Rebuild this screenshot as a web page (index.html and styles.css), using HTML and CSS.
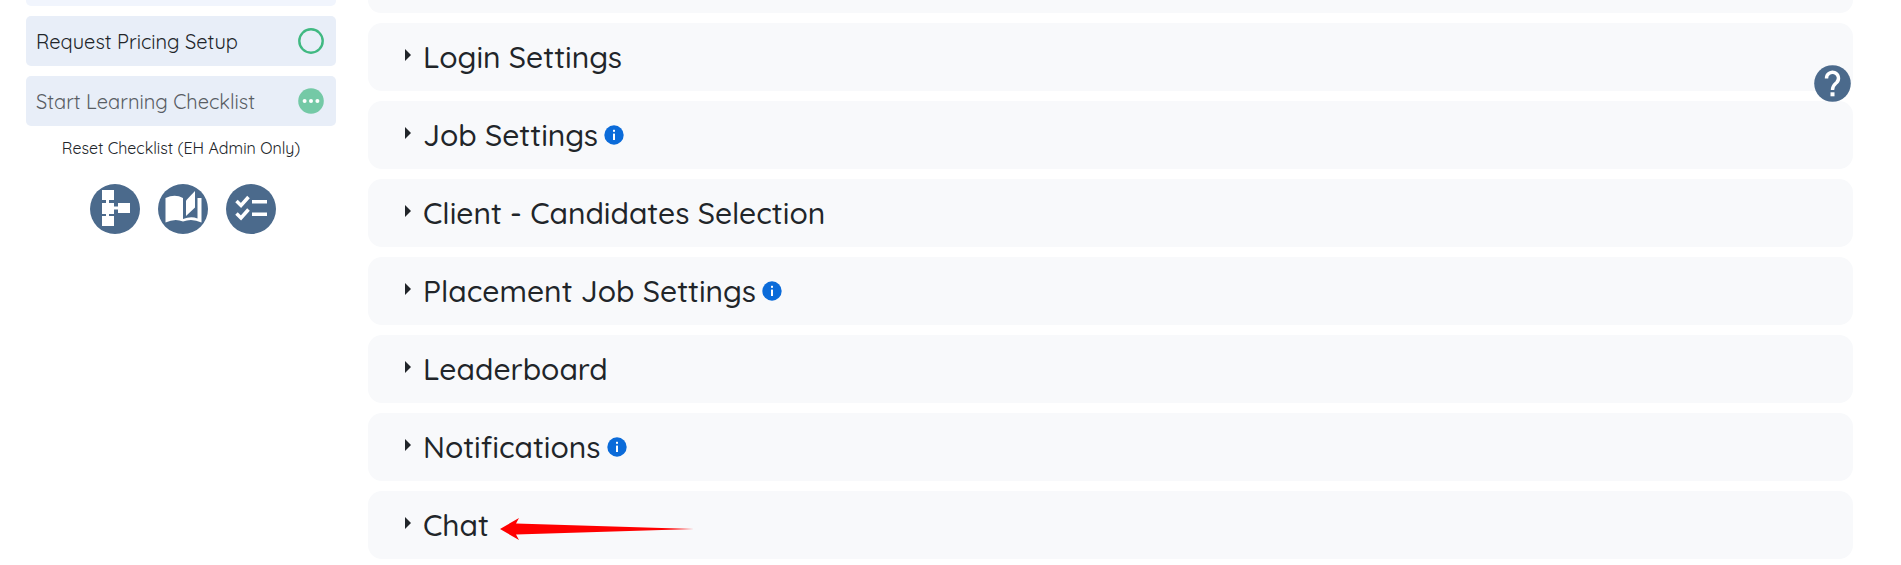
FILE: index.html
```html
<!DOCTYPE html>
<html lang="en">
<head>
<meta charset="utf-8">
<meta name="viewport" content="width=device-width, initial-scale=1">
<title>Settings</title>
<link rel="stylesheet" href="styles.css">
</head>
<body>
<svg class="defs" aria-hidden="true">
  <symbol id="info" viewBox="0 0 20 20"><circle cx="10" cy="10" r="9.7" fill="#0b6bd9"/><rect x="9" y="4.8" width="2" height="2" fill="#fff"/><rect x="9" y="8.6" width="2" height="6.4" fill="#fff"/></symbol>
  <symbol id="caret" viewBox="0 0 6 12"><path d="M0 0L6 6L0 12Z" fill="#212529"/></symbol>
</svg>
<div class="page">
  <aside class="sidebar">
    <div class="step-cut"></div>
    <button class="step" type="button">Request Pricing Setup
      <svg class="status" viewBox="0 0 26 26" aria-hidden="true"><circle cx="13" cy="13" r="11.7" fill="none" stroke="#40b982" stroke-width="2.4"/></svg>
    </button>
    <button class="step step-muted" type="button">Start Learning Checklist
      <svg class="status" viewBox="0 0 26 26" aria-hidden="true"><circle cx="13" cy="13" r="12.8" fill="#74c9a6"/><g fill="#fff"><circle cx="6.6" cy="13" r="2"/><circle cx="13" cy="13" r="2"/><circle cx="19.4" cy="13" r="2"/></g></svg>
    </button>
    <button class="reset" type="button">Reset Checklist (EH Admin Only)</button>
    <div class="tools">
      <button class="tool" type="button" aria-label="Workflow">
        <svg viewBox="0 0 50 50" aria-hidden="true"><g fill="#fff"><path d="M12 6h12v10h-12zM12 19h12v11h-12zM12 32h12v10h-12zM28 19h12v10h-12z"/><path d="M16 15h3v18h-3zM23 22.500h6v3h-6z"/></g></svg>
      </button>
      <button class="tool" type="button" aria-label="Guide">
        <svg viewBox="0 0 50 50" aria-hidden="true"><path d="M7.500 14Q17 9.500 25 14V37.500Q17 34 7.500 38.500Z" fill="#fff"/><path d="M28 16.500L37 7V23.500L28 32Z" fill="#fff"/><path d="M39.500 14H43.500V38.500Q34 34 25 37.500V35Q33 32 39.500 34.500Z" fill="#fff"/></svg>
      </button>
      <button class="tool" type="button" aria-label="Checklist">
        <svg viewBox="0 0 50 50" aria-hidden="true"><path d="M10.500 17L15 21.500L22.500 13M10.500 29.500L15 34L22.500 25.500" fill="none" stroke="#fff" stroke-width="3.500"/><path d="M26 16h15v3.500h-15zM26 28.500h15v3.500h-15z" fill="#fff"/></svg>
      </button>
    </div>
  </aside>
  <main class="sections">
    <div class="section-cut"></div>
    <button class="section" type="button"><svg class="caret"><use href="#caret"/></svg><span>Login Settings</span></button>
    <button class="section" type="button"><svg class="caret"><use href="#caret"/></svg><span>Job Settings</span><svg class="info"><use href="#info"/></svg></button>
    <button class="section" type="button"><svg class="caret"><use href="#caret"/></svg><span>Client - Candidates Selection</span></button>
    <button class="section" type="button"><svg class="caret"><use href="#caret"/></svg><span>Placement Job Settings</span><svg class="info"><use href="#info"/></svg></button>
    <button class="section" type="button"><svg class="caret"><use href="#caret"/></svg><span>Leaderboard</span></button>
    <button class="section" type="button"><svg class="caret"><use href="#caret"/></svg><span>Notifications</span><svg class="info"><use href="#info"/></svg></button>
    <button class="section" type="button"><svg class="caret"><use href="#caret"/></svg><span>Chat</span></button>
    <svg class="pointer" viewBox="0 0 194 24" aria-hidden="true"><path d="M0 12L19 1L16 6.500L194 12L16 17.500L19 23Z" fill="#f00"/></svg>
  </main>
</div>
<button class="help" type="button" aria-label="Help">
  <svg viewBox="0 0 37 37" aria-hidden="true"><circle cx="18.500" cy="18.500" r="18.300" fill="#4b6a8c"/><path d="M12.500 13.500A6 6 0 1 1 22.700 17.500C20.300 19.600 18.500 20.500 18.500 25" fill="none" stroke="#fff" stroke-width="3.400"/><rect x="16.500" y="27.300" width="4" height="4" fill="#fff"/></svg>
</button>
</body>
</html>
```
FILE: styles.css
```css
* {
  box-sizing: border-box;
}

body {
  margin: 0;
  background: #fff;
  color: #212529;
  font-family: Quicksand, Lato, sans-serif;
}

button {
  margin: 0;
  padding: 0;
  border: 0;
  background: none;
  color: inherit;
  font: inherit;
  text-align: left;
  cursor: pointer;
}

svg {
  display: block;
  flex: none;
}

.defs {
  position: absolute;
  width: 0;
  height: 0;
}

.page {
  display: grid;
  grid-template-columns: 310px 1fr;
  gap: 32px;
  padding: 0 48px 6px 26px;
}

.sidebar {
  display: flex;
  flex-direction: column;
}

.step-cut {
  height: 6px;
  margin-bottom: 10px;
  border-radius: 0 0 5px 5px;
  background: #f1f5fd;
}

.step {
  display: flex;
  align-items: center;
  justify-content: space-between;
  min-height: 50px;
  margin-bottom: 10px;
  padding: 0 12px 0 10px;
  border-radius: 5px;
  background: #e8eef8;
  font-size: 20px;
}

.step-muted {
  color: #585d64;
}

.status {
  width: 26px;
  height: 26px;
}

.reset {
  align-self: center;
  font-size: 16px;
  line-height: 24px;
}

.tools {
  display: flex;
  justify-content: center;
  gap: 18px;
  margin-top: 24px;
  padding-left: 4px;
}

.tool {
  width: 50px;
  height: 50px;
  border-radius: 50%;
  background: #4b6a8c;
}

.sections {
  position: relative;
  display: flex;
  flex-direction: column;
  gap: 10px;
}

.section-cut {
  height: 13px;
  border-radius: 0 0 14px 14px;
  background: #f8f9fb;
}

.section {
  display: flex;
  align-items: center;
  min-height: 68px;
  padding: 0 37px;
  border-radius: 14px;
  background: #f8f9fb;
  font-size: 30px;
  font-weight: 500;
  line-height: 40px;
}

.caret {
  width: 6px;
  height: 12px;
  margin: 0 12px 4px 0;
}

.info {
  width: 20px;
  height: 20px;
  margin-left: 6px;
}

.pointer {
  position: absolute;
  left: 132px;
  bottom: 18px;
  width: 194px;
  height: 24px;
}

.help {
  position: absolute;
  top: 65px;
  right: 50px;
  width: 37px;
  height: 37px;
}
```
